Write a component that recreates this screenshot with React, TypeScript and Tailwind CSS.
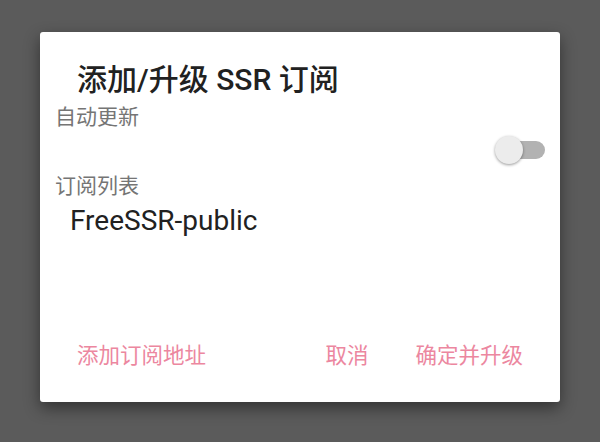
import React from 'react'

const font = { fontFamily: "Roboto, 'Noto Sans CJK SC', sans-serif" }

export default function App() {
  return (
    <div className="w-[600px] h-[442px] bg-[#5b5b5b] pt-[32px] pl-[40px]" style={font}>
      <div className="w-[520px] h-[370px] bg-white rounded-[3px] shadow-[0_6px_16px_rgba(0,0,0,0.45)] flex flex-col">
        <div className="pl-[37px] pt-[31px] text-[30px] leading-[34px] font-medium text-[#212121]">添加/升级 SSR 订阅</div>
        <div className="pl-[15px] mt-[7px] text-[21px] leading-[26px] text-[#757575]">自动更新</div>
        <div className="flex justify-end pr-[15px] mt-[5px]">
          <div className="relative w-[50px] h-[30px] flex items-center justify-end">
            <div className="w-[36px] h-[18px] rounded-full bg-[#b2b2b2]" />
            <div className="absolute left-0 top-[1px] w-[28px] h-[28px] rounded-full bg-[#ececec] shadow-[0_1px_3px_rgba(0,0,0,0.4)]" />
          </div>
        </div>
        <div className="pl-[15px] mt-[8px] text-[21px] leading-[26px] text-[#757575]">订阅列表</div>
        <div className="pl-[30px] mt-[6px] text-[28px] leading-[32px] text-[#212121]">FreeSSR-public</div>
        <div className="flex-1" />
        <div className="flex items-center pb-[33px] text-[21.5px] leading-[26px] text-[#ec87a0]">
          <span className="ml-[37px]">添加订阅地址</span>
          <span className="ml-auto">取消</span>
          <span className="ml-[47px] mr-[37px]">确定并升级</span>
        </div>
      </div>
    </div>
  )
}
